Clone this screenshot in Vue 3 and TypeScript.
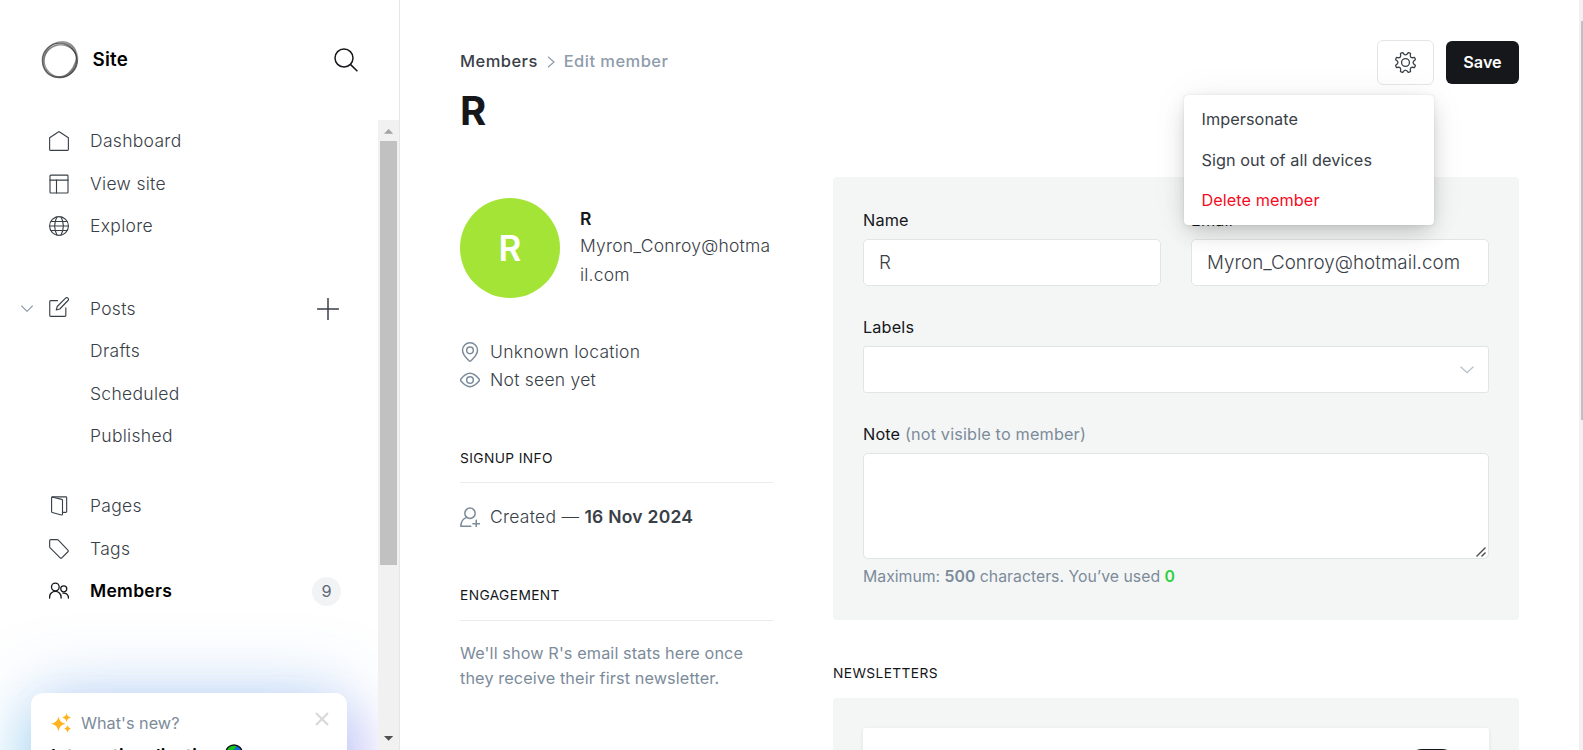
<script setup lang="ts">
import { ref } from 'vue'

interface NavItem {
  label: string
  icon?: 'home' | 'layout' | 'globe' | 'edit' | 'pages' | 'tag' | 'members'
  active?: boolean
  count?: number
  expandable?: boolean
}

const groups: NavItem[][] = [
  [
    { label: 'Dashboard', icon: 'home' },
    { label: 'View site', icon: 'layout' },
    { label: 'Explore', icon: 'globe' },
  ],
  [
    { label: 'Posts', icon: 'edit', expandable: true },
    { label: 'Drafts' },
    { label: 'Scheduled' },
    { label: 'Published' },
  ],
  [
    { label: 'Pages', icon: 'pages' },
    { label: 'Tags', icon: 'tag' },
    { label: 'Members', icon: 'members', active: true, count: 9 },
  ],
]

const icons: Record<string, string[]> = {
  home: ['M.75 8.2 11.2 1.1a1.4 1.4 0 0 1 1.6 0L23.25 8.2V22.3a1 1 0 0 1-1 1H1.75a1 1 0 0 1-1-1Z'],
  layout: ['M2.2 1.3h19.6a1 1 0 0 1 1 1v19.5a1 1 0 0 1-1 1H2.2a1 1 0 0 1-1-1V2.3a1 1 0 0 1 1-1Z', 'M1.2 7.3h21.6', 'M9 7.3v15.5'],
  globe: [
    'M23.3 12A11.3 11.3 0 1 1 .7 12a11.3 11.3 0 0 1 22.6 0Z',
    'M9.6 1C6 8 6 16 9.6 23', 'M14.4 1c3.6 7 3.6 15 0 22',
    'M.8 12h22.4', 'M2.3 6.6h19.4', 'M2.3 17.4h19.4',
  ],
  edit: [
    'M20.2 13v9.2a1 1 0 0 1-1 1H1.9a1 1 0 0 1-1-1V5.3a1 1 0 0 1 1-1h8.3',
    'M22.8 1.3a2 2 0 0 0-2.9 0L9.9 11.4 8.7 15.6l4.2-1.2L22.8 4.2a2 2 0 0 0 0-2.9Z',
  ],
  pages: [
    'M3.8 1H20.2a1 1 0 0 1 1 1v16.6a1 1 0 0 1-1 1h-3',
    'M3.6 1.2 15.4 4.1a1 1 0 0 1 .8 1v16.7a1 1 0 0 1-1.3 1L3.9 19.7a1 1 0 0 1-.8-1V2a1 1 0 0 1 .5-.8Z',
  ],
  tag: ['M.8 2v7.2a2 2 0 0 0 .6 1.4l12 12a1.4 1.4 0 0 0 2 0l7.3-7.3a1.4 1.4 0 0 0 0-2L11.2 1.4a2 2 0 0 0-1.4-.6H2A1.2 1.2 0 0 0 .8 2Z'],
  members: [
    'M12.2 7.2a4.6 4.6 0 1 1-9.2 0 4.6 4.6 0 0 1 9.2 0Z',
    'M.7 20.5v-1.2a6.9 6.9 0 0 1 13.8 0v1.2',
    'M21.3 9.4a3.6 3.6 0 1 1-7.2 0 3.6 3.6 0 0 1 7.2 0Z',
    'M16.8 14.6a5.4 5.4 0 0 1 6.5 5.2v.7',
  ],
}

// Polar coordinates around the centre of the 24px icon box.
function polar(degrees: number, radius: number): string {
  const a = (degrees * Math.PI) / 180
  return `${(12 + radius * Math.cos(a)).toFixed(2)} ${(12 + radius * Math.sin(a)).toFixed(2)}`
}

// Eight rounded teeth separated by round notches.
function gearOutline(): string {
  let d = ''
  for (let k = 0; k < 8; k++) {
    const t = 22.5 + k * 45
    d += `${k ? 'L' : 'M'}${polar(t - 7, 11.7)}Q${polar(t, 12)} ${polar(t + 7, 11.7)}`
    d += `C${polar(t + 15, 7.8)} ${polar(t + 30, 7.8)} ${polar(t + 38, 11.7)}`
  }
  return d + 'Z'
}

const gearPath = gearOutline()

const name = ref('R')
const email = ref('Myron_Conroy@hotmail.com')
const note = ref('')
</script>

<template>
  <div class="app">
    <aside class="sidebar">
      <header class="brand">
        <svg class="logo" viewBox="0 0 38 38" fill="none">
          <circle cx="18.6" cy="19.3" r="17.2" stroke="#222" stroke-opacity=".7" stroke-width="1.4" />
          <ellipse cx="19.8" cy="19.8" rx="16.6" ry="16" stroke="#222" stroke-opacity=".5" stroke-width="1.2" />
          <ellipse cx="19.4" cy="18.6" rx="18.4" ry="15.8" stroke="#444" stroke-opacity=".5" stroke-width="1.3" transform="rotate(-58 19 19)" />
          <ellipse cx="19" cy="19.4" rx="18.2" ry="15.8" stroke="#666" stroke-opacity=".45" stroke-width="1.3" transform="rotate(-35 19 19)" />
          <path d="M37 19c-1 8-6 14-14.5 16.600C28.500 31.500 32.500 26 34.500 18.500Z" fill="#555" fill-opacity=".5" />
          <path d="M18 1.500c8-2.500 15.500 1 17.500 9C31 5.500 26 3.500 18 2.500Z" fill="#777" fill-opacity=".5" />
        </svg>
        <strong class="site">Site</strong>
        <svg class="search" viewBox="0 0 24 24" fill="none" stroke="#15171a" stroke-width="1.5">
          <circle cx="10" cy="10" r="9" /><path d="m16.4 16.4 7 6.8" />
        </svg>
      </header>

      <div class="nav-area">
        <nav class="nav">
          <ul v-for="(group, g) in groups" :key="g" class="group">
            <li v-for="item in group" :key="item.label" class="item" :class="{ active: item.active }">
              <svg v-if="item.expandable" class="chevron" viewBox="0 0 12 8"><path d="m.6 1 5.4 5.4L11.400 1" /></svg>
              <svg v-if="item.icon" class="icon" viewBox="0 0 24 24">
                <path v-for="d in icons[item.icon]" :key="d" :d="d" />
              </svg>
              <span class="label">{{ item.label }}</span>
              <svg v-if="item.expandable" class="plus" viewBox="0 0 22 22"><path d="M.5 11h21M11 .500v21" /></svg>
              <span v-if="item.count" class="count">{{ item.count }}</span>
            </li>
          </ul>
          <section class="news">
            <div class="news-head">
              <svg class="sparkles" viewBox="0 0 20 20" fill="#ffb31f">
                <path d="M7.500 3.500c1 4.300 2.500 6 7.200 7.300-4.700 1.300-6.200 3-7.200 7.700-1-4.700-2.500-6.400-7.500-7.700 5-1.300 6.500-3 7.500-7.300Z" />
                <path d="M15.500 0c.6 2.600 1.600 3.700 4.500 4.500-2.900.8-3.900 1.900-4.500 4.800-.6-2.900-1.600-4-4.300-4.800C13.900 3.700 14.900 2.600 15.500 0Z" />
                <path d="M16.600 12c.5 2.100 1.300 3 3.400 3.700-2.100.7-2.900 1.700-3.400 4-.5-2.300-1.300-3.300-3.500-4 2.200-.7 3-1.600 3.500-3.700Z" />
              </svg>
              <span>What's new?</span>
              <svg class="close" viewBox="0 0 14 14"><path d="m1 1 12 12M13 1 1 13" /></svg>
            </div>
            <div class="news-title">
              <span>Internationalisation</span>
              <svg class="earth" viewBox="0 0 18 18">
                <circle cx="9" cy="9" r="8.1" fill="#0a6fd8" stroke="#111" stroke-width="1.5" />
                <path d="M1.800 7.500C3 3.500 6 1.700 9.500 1.800c2 .4 2 1.700.4 2.600C8 5 8.500 7 6.800 8.500 5 9.500 3 10 1.800 7.500ZM12 6l4 1v4l-3-1Z" fill="#16c60c" />
              </svg>
            </div>
          </section>
        </nav>
        <div class="scrollbar">
          <svg class="arrow" viewBox="0 0 21 21"><path d="M6 13.800h9.200L10.600 9Z" fill="#a3a3a3" /></svg>
          <div class="thumb"></div>
          <svg class="arrow down" viewBox="0 0 21 21"><path d="M6 7h9.200l-4.600 4.800Z" fill="#505050" /></svg>
        </div>
      </div>
    </aside>

    <main class="main">
      <header class="top">
        <div>
          <div class="crumbs">
            <span>Members</span>
            <svg class="sep" viewBox="0 0 8 12"><path d="m1 .7 6 5.300-6 5.300" /></svg>
            <span class="current">Edit member</span>
          </div>
          <h1>R</h1>
        </div>
        <div class="actions">
          <button class="gear" type="button" aria-label="Settings">
            <svg viewBox="0 0 24 24"><circle cx="12" cy="12" r="4.500" /><path :d="gearPath" /></svg>
          </button>
          <button class="save" type="button">Save</button>
          <ul class="menu">
            <li>Impersonate</li>
            <li>Sign out of all devices</li>
            <li class="danger">Delete member</li>
          </ul>
        </div>
      </header>

      <div class="columns">
        <section class="profile">
          <div class="person">
            <div class="avatar">R</div>
            <div class="who">
              <strong>R</strong>
              <p>{{ email }}</p>
            </div>
          </div>
          <ul class="facts">
            <li>
              <svg viewBox="0 0 24 24"><circle cx="12" cy="10" r="4" /><path d="M12 1a9 9 0 0 1 9 9c0 4.200-5.300 10.200-7.800 12.500a1.800 1.800 0 0 1-2.400 0C8.300 20.200 3 14.200 3 10a9 9 0 0 1 9-9Z" /></svg>
              Unknown location
            </li>
            <li>
              <svg viewBox="0 0 24 24"><circle cx="12" cy="12" r="4" /><path d="M23.100 11c.5.600.5 1.400 0 2-1.900 2.300-6.500 7-11.100 7S2.800 15.300.9 13a1.600 1.600 0 0 1 0-2C2.800 8.700 7.400 4 12 4s9.200 4.700 11.100 7Z" /></svg>
              Not seen yet
            </li>
          </ul>
          <h4 class="signup">Signup info</h4>
          <p class="created">
            <svg viewBox="0 0 24 24"><circle cx="12" cy="7.5" r="6.2" /><path d="M8 12.500C3.500 14.200 1 17.500 1 23h12M19.500 16v8M15.500 20h8" /></svg>
            <span>Created — <b>16 Nov 2024</b></span>
          </p>
          <h4 class="engagement">Engagement</h4>
          <p class="stats">We'll show R's email stats here once they receive their first newsletter.</p>
        </section>

        <section class="details">
          <form class="panel" @submit.prevent>
            <div class="pair">
              <label class="field"><span>Name</span><input v-model="name" type="text"></label>
              <label class="field"><span>Email</span><input v-model="email" type="text"></label>
            </div>
            <div class="field">
              <span>Labels</span>
              <div class="select">
                <svg viewBox="0 0 14 8"><path d="m.6.8 6.400 6 6.400-6" /></svg>
              </div>
            </div>
            <label class="field note">
              <span>Note <em>(not visible to member)</em></span>
              <textarea v-model="note"></textarea>
              <svg class="grip" viewBox="0 0 10 10"><path d="M.5 9.500 9.500.5M5.500 9.500l4-4" /></svg>
            </label>
            <p class="hint">Maximum: <b>500</b> characters. You’ve used <b class="used">{{ note.length }}</b></p>
          </form>
          <h4 class="newsletters">Newsletters</h4>
          <div class="panel list">
            <div class="card"><span class="toggle"></span></div>
          </div>
        </section>
      </div>
    </main>

    <div class="page-scroll"><div class="page-thumb"></div></div>
  </div>
</template>

<style>
html, body { margin: 0; overflow: hidden; }
</style>

<style scoped>
* { box-sizing: border-box; }
ul, p, h1, h4 { margin: 0; padding: 0; list-style: none; }
svg { display: block; flex: none; }
.app {
  display: flex; width: 1583px; height: 750px; overflow: hidden; background: #fff;
  font-family: Inter, "Liberation Sans", sans-serif; font-size: 17.5px; color: #394047;
}
.sidebar { display: flex; flex-direction: column; width: 400px; flex: none; border-right: 1px solid #e4e7ea; }
.brand { display: flex; align-items: center; height: 120px; padding: 0 41px; }
.logo { width: 38px; height: 38px; }
.site { margin: -2px 0 0 13.5px; font-size: 18.75px; font-weight: 600; letter-spacing: .2px; color: #000; }
.search { width: 24px; height: 24px; margin-left: auto; }
.nav-area { display: flex; height: 630px; }
.nav { flex: 1; overflow: hidden; }
.group { margin-bottom: 40.5px; }
.group + .group + .group { margin-top: -12.6px; margin-bottom: 80.6px; }
.item { display: flex; align-items: center; height: 42.4px; padding-left: 90px; font-weight: 300; letter-spacing: .3px; }
.label { margin-top: -1px; }
.icon, .plus, .chevron { fill: none; stroke: #394047; stroke-linecap: round; stroke-linejoin: round; }
.icon { width: 20px; height: 20px; margin: 0 21px 0 -41px; stroke-width: 1.35; }
.chevron { width: 12px; height: 8px; margin: 0 16px 0 -69px; stroke: #8e9cac; stroke-width: 1.1; }
.chevron + .icon { margin: -3px 21px 0 0; }
.plus { width: 22px; height: 22px; margin: 0 39.5px 0 auto; stroke-width: 1.5; }
.active { font-weight: 600; color: #000; }
.active .icon { stroke: #15171a; stroke-width: 1.6; }
.count {
  width: 29px; height: 29px; margin: 0 37px 0 auto; border-radius: 50%; background: #f1f3f5;
  color: #5d6975; font-size: 16.25px; font-weight: 400; line-height: 29px; text-align: center; letter-spacing: 0;
}
.news {
  height: 130px; margin: 0 31px; padding: 18px 18px 0 20px; border-radius: 12px; background: #fff;
  box-shadow: -14px 26px 50px rgba(90, 225, 240, .24), 18px 26px 50px rgba(185, 100, 245, .24), 0 -2px 70px rgba(70, 140, 225, .34);
}
.news-head { display: flex; align-items: center; height: 24px; color: #7c8b9a; font-size: 16.25px; }
.sparkles { width: 20px; height: 20px; margin-right: 10px; }
.close { width: 14px; height: 14px; margin: -8px 0 0 auto; fill: none; stroke: #d8d9da; stroke-width: 2.2; }
.news-title { display: flex; gap: 6px; margin-top: 9px; color: #000; font-size: 17.5px; font-weight: 600; letter-spacing: .25px; line-height: 24px; }
.earth { width: 18px; height: 18px; }
.scrollbar { display: flex; flex-direction: column; align-items: center; width: 21px; background: #f1f1f1; }
.arrow { width: 21px; height: 21px; }
.thumb { width: 17px; height: 424px; background: #c1c1c1; }
.down { margin-top: auto; }

.main { width: 1179px; padding: 41px 60px 0; overflow: hidden; }
.top { display: flex; justify-content: space-between; height: 136px; }
.crumbs { display: flex; align-items: center; height: 40px; font-size: 16.5px; font-weight: 500; letter-spacing: .45px; }
.sep { width: 8px; height: 12px; margin: 1px 9px 0; fill: none; stroke: #8e9cac; stroke-width: 1.2; }
.current { color: #8e9cac; }
h1 { margin-top: 6px; font-size: 40px; line-height: 48px; font-weight: 700; color: #15171a; }
.actions { position: relative; display: flex; gap: 12px; height: 45px; margin-top: -1px; }
.gear { width: 57px; height: 45px; padding: 0 1px 1px 0; display: grid; place-items: center; border: 1px solid #e3e6e9; border-radius: 6px; background: #fff; }
.gear svg { width: 21px; height: 21px; overflow: visible; fill: none; stroke: #394047; stroke-width: 1.5; stroke-linejoin: round; }
.save { width: 73px; height: 43px; margin-top: 1px; padding: 0 0 2px; border: 0; border-radius: 6px; background: #15171a; color: #fff; font: 600 16.25px Inter, sans-serif; }
.menu {
  position: absolute; z-index: 2; top: 55px; right: 85px; width: 250px; height: 130px; padding: 4.4px 0 5px 17.5px;
  border-radius: 4px; background: #fff; font-size: 16.25px; line-height: 40.4px; letter-spacing: .06px; color: #394047;
  box-shadow: 0 0 1px rgba(0, 0, 0, .2), 0 1px 6px rgba(0, 0, 0, .06), 0 10px 22px -4px rgba(0, 0, 0, .2), 0 0 40px rgba(0, 0, 0, .05);
}
.danger { color: #f50b23; }

.columns { display: flex; gap: 60px; }
.profile { width: 313px; flex: none; padding-top: 21px; }
.person { display: flex; gap: 20px; height: 100px; }
.avatar { width: 100px; height: 100px; flex: none; border-radius: 50%; background: #a4e437; color: #fff; font-size: 35px; font-weight: 600; line-height: 101px; text-align: center; }
.who { flex: 1; padding-top: 8px; min-width: 0; }
.who strong { display: block; font-weight: 600; line-height: 25px; color: #15171a; }
.who p { font-weight: 300; line-height: 29px; letter-spacing: .22px; overflow-wrap: anywhere; color: #394047; }
.facts { margin-top: 39px; font-weight: 300; letter-spacing: .25px; }
.facts li, .created { display: flex; align-items: center; gap: 10px; height: 28.3px; }
.facts svg, .created svg { width: 20px; height: 20px; margin-top: 1px; fill: none; stroke: #7c8b9a; stroke-width: 1.8; stroke-linecap: round; }
h4 { font-size: 13.75px; font-weight: 400; line-height: 20px; letter-spacing: .38px; text-transform: uppercase; color: #15171a; }
.signup, .engagement { height: 35px; border-bottom: 1px solid #e9ebed; }
.signup { margin-top: 54px; }
.created { margin-top: 20px; font-weight: 300; letter-spacing: .26px; }
.created b { font-weight: 600; }
.engagement { margin-top: 54px; height: 36px; }
.stats { margin-top: 20px; font-size: 16.25px; line-height: 25.3px; letter-spacing: .1px; color: #7c8b9a; }

.details { width: 686px; }
.panel { display: block; height: 443px; padding: 30px; border-radius: 4px; background: #f4f6f6; }
.pair { display: grid; grid-template-columns: 1fr 1fr; gap: 30px; }
.field { display: block; height: 107px; }
.field > span { display: block; height: 32px; padding-top: 1px; font-size: 16.25px; font-weight: 400; letter-spacing: .15px; line-height: 24px; color: #15171a; }
.field em { font-style: normal; font-weight: 400; color: #7c8b9a; }
input, .select, textarea { display: block; width: 100%; height: 47px; border: 1px solid #e1e5e8; border-radius: 5px; background: #fff; }
input { padding: 0 15px; color: #394047; font: 300 18.75px Inter, sans-serif; letter-spacing: .06px; outline: 0; }
.select { display: flex; align-items: center; justify-content: flex-end; padding: 1px 14px 0 0; border-radius: 3px; }
.select svg { width: 14px; height: 8px; fill: none; stroke: #b4bcc5; stroke-width: 1.2; }
textarea { height: 106px; resize: none; outline: 0; }
.note { position: relative; height: 138px; }
.grip { position: absolute; right: 3px; bottom: 2px; width: 10px; height: 10px; fill: none; stroke: #4a4a4a; stroke-width: 1.4; }
.hint { padding-top: 6px; color: #7c8b9a; font-size: 15.8px; line-height: 24px; }
.hint b { font-weight: 600; }
.hint .used { color: #30cf43; }
.newsletters { padding-top: 43px; height: 78px; }
.list { height: 100px; }
.card { height: 90px; border-radius: 3px; background: #fff; box-shadow: 0 1px 4px rgba(0, 0, 0, .08); padding: 21px 32px; }
.toggle { display: block; width: 50px; height: 30px; margin-left: auto; border-radius: 15px; background: #15171a; }

.page-scroll { width: 4px; padding: 21px 0 0 2px; background: #f1f1f1; }
.page-thumb { width: 2px; height: 399px; background: #c1c1c1; }
</style>
